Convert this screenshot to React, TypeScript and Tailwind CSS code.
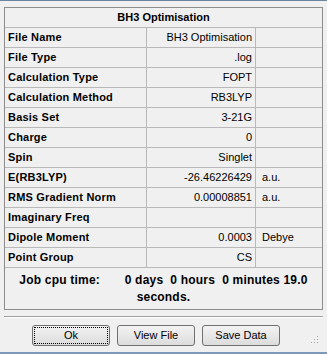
import React from 'react';

const rows: [string, string, string][] = [
  ['File Name', 'BH3 Optimisation', ''],
  ['File Type', '.log', ''],
  ['Calculation Type', 'FOPT', ''],
  ['Calculation Method', 'RB3LYP', ''],
  ['Basis Set', '3-21G', ''],
  ['Charge', '0', ''],
  ['Spin', 'Singlet', ''],
  ['E(RB3LYP)', '-26.46226429', 'a.u.'],
  ['RMS Gradient Norm', '0.00008851', 'a.u.'],
  ['Imaginary Freq', '', ''],
  ['Dipole Moment', '0.0003', 'Debye'],
  ['Point Group', 'CS', ''],
];

function Btn({ label, focused }: { label: string; focused?: boolean }) {
  return (
    <div className="h-[21px] w-[78px] rounded-[3px] border border-[#707070] bg-gradient-to-b from-[#f3f3f3] to-[#dcdcdc] p-[1px]">
      <div
        className={
          'flex h-full w-full items-center justify-center text-[11px] text-black ' +
          (focused ? 'border border-dotted border-black' : '')
        }
      >
        {label}
      </div>
    </div>
  );
}

export default function App() {
  return (
    <div
      className="flex h-[354px] w-[327px] flex-col border-t border-b-2 border-t-[#6b84a3] border-b-[#7d98b8] bg-[#f0f0f0] text-black"
      style={{ fontFamily: '"Liberation Sans", Arial, sans-serif' }}
    >
      {/* results table */}
      <div className="ml-[4px] mt-[6px] w-[319px] border border-[#8c8c8c]">
        <div className="flex h-[20px] items-center justify-center border-b border-[#b9b9b9] text-[11px] font-bold">
          BH3 Optimisation
        </div>
        {rows.map(([label, value, unit]) => (
          <div key={label} className="flex h-[20px] border-b border-[#b9b9b9] text-[11px]">
            <div className="flex w-[142px] items-center border-r border-[#b9b9b9] pl-[3px] font-bold tracking-[0.2px]">
              {label}
            </div>
            <div className="flex w-[109px] items-center justify-end border-r border-[#b9b9b9] pr-[3px]">
              {value}
            </div>
            <div className="flex flex-1 items-center pl-[6px]">{unit}</div>
          </div>
        ))}
        <div className="flex h-[41px] flex-col items-center justify-center text-[12px] font-bold leading-[17px] tracking-[0.2px]">
          <div className="whitespace-pre">Job cpu time:{'       '}0 days  0 hours  0 minutes 19.0</div>
          <div>seconds.</div>
        </div>
      </div>

      {/* separator */}
      <div className="ml-[4px] mt-[6px] w-[319px] border-t border-b border-t-[#a0a0a0] border-b-white" />

      {/* buttons */}
      <div className="relative mt-[7px] flex gap-[7px] pl-[32px]">
        <Btn label="Ok" focused />
        <Btn label="View File" />
        <Btn label="Save Data" />
        <svg className="absolute right-[8px] top-[11px]" width="10" height="10" viewBox="0 0 10 10">
          {[
            [8, 0],
            [8, 3],
            [5, 3],
            [8, 6],
            [5, 6],
            [2, 6],
          ].map(([x, y]) => (
            <rect key={`${x}-${y}`} x={x} y={y} width="1" height="1" fill="#a8a8a8" />
          ))}
        </svg>
      </div>
    </div>
  );
}
